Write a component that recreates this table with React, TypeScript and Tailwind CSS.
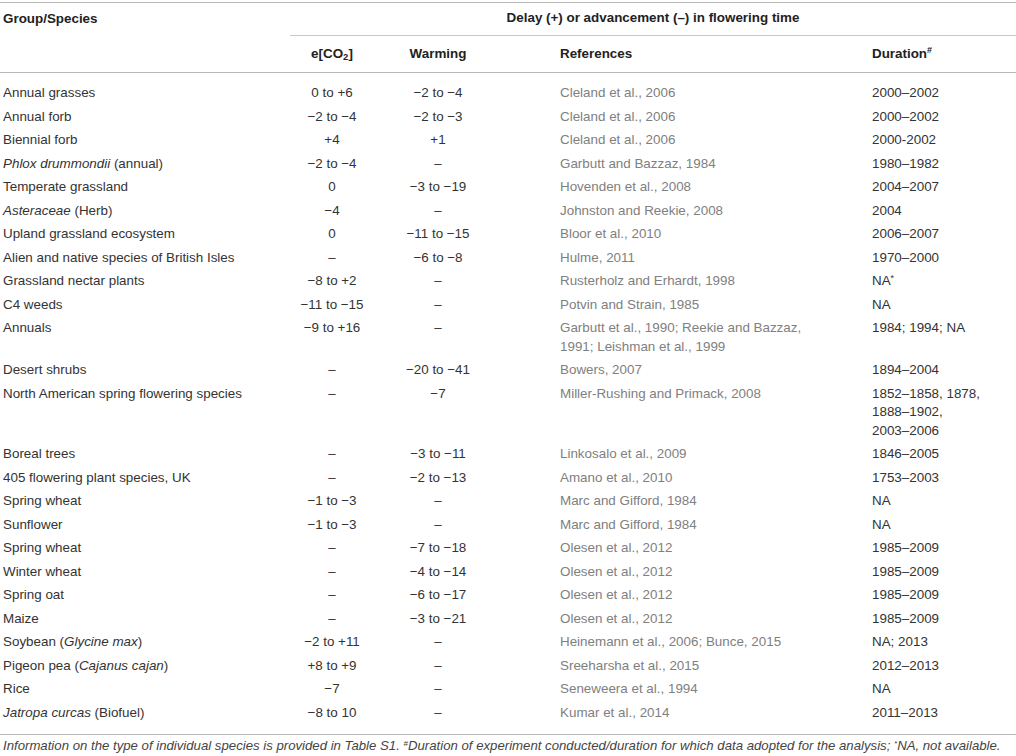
import React from 'react';

// Table: flowering time shifts under e[CO2] and warming

type Row = {
  species: React.ReactNode;
  co2: string;
  warm: string;
  refs: React.ReactNode;
  dur: React.ReactNode;
};

const M = '\u2212';
const D = '\u2013';

const rows: Row[] = [
  { species: 'Annual grasses', co2: `0 to +6`, warm: `${M}2 to ${M}4`, refs: 'Cleland et al., 2006', dur: `2000${D}2002` },
  { species: 'Annual forb', co2: `${M}2 to ${M}4`, warm: `${M}2 to ${M}3`, refs: 'Cleland et al., 2006', dur: `2000${D}2002` },
  { species: 'Biennial forb', co2: '+4', warm: '+1', refs: 'Cleland et al., 2006', dur: '2000-2002' },
  { species: <><i>Phlox drummondii</i> (annual)</>, co2: `${M}2 to ${M}4`, warm: D, refs: 'Garbutt and Bazzaz, 1984', dur: `1980${D}1982` },
  { species: 'Temperate grassland', co2: '0', warm: `${M}3 to ${M}19`, refs: 'Hovenden et al., 2008', dur: `2004${D}2007` },
  { species: <><i>Asteraceae</i> (Herb)</>, co2: `${M}4`, warm: D, refs: 'Johnston and Reekie, 2008', dur: '2004' },
  { species: 'Upland grassland ecosystem', co2: '0', warm: `${M}11 to ${M}15`, refs: 'Bloor et al., 2010', dur: `2006${D}2007` },
  { species: 'Alien and native species of British Isles', co2: D, warm: `${M}6 to ${M}8`, refs: 'Hulme, 2011', dur: `1970${D}2000` },
  { species: 'Grassland nectar plants', co2: `${M}8 to +2`, warm: D, refs: 'Rusterholz and Erhardt, 1998', dur: <>NA<sup className="text-[9px]">*</sup></> },
  { species: 'C4 weeds', co2: `${M}11 to ${M}15`, warm: D, refs: 'Potvin and Strain, 1985', dur: 'NA' },
  {
    species: 'Annuals',
    co2: `${M}9 to +16`,
    warm: D,
    refs: <>Garbutt et al., 1990; Reekie and Bazzaz,<br />1991; Leishman et al., 1999</>,
    dur: '1984; 1994; NA',
  },
  { species: 'Desert shrubs', co2: D, warm: `${M}20 to ${M}41`, refs: 'Bowers, 2007', dur: `1894${D}2004` },
  {
    species: 'North American spring flowering species',
    co2: D,
    warm: `${M}7`,
    refs: 'Miller-Rushing and Primack, 2008',
    dur: <>1852{D}1858, 1878,<br />1888{D}1902,<br />2003{D}2006</>,
  },
  { species: 'Boreal trees', co2: D, warm: `${M}3 to ${M}11`, refs: 'Linkosalo et al., 2009', dur: `1846${D}2005` },
  { species: '405 flowering plant species, UK', co2: D, warm: `${M}2 to ${M}13`, refs: 'Amano et al., 2010', dur: `1753${D}2003` },
  { species: 'Spring wheat', co2: `${M}1 to ${M}3`, warm: D, refs: 'Marc and Gifford, 1984', dur: 'NA' },
  { species: 'Sunflower', co2: `${M}1 to ${M}3`, warm: D, refs: 'Marc and Gifford, 1984', dur: 'NA' },
  { species: 'Spring wheat', co2: D, warm: `${M}7 to ${M}18`, refs: 'Olesen et al., 2012', dur: `1985${D}2009` },
  { species: 'Winter wheat', co2: D, warm: `${M}4 to ${M}14`, refs: 'Olesen et al., 2012', dur: `1985${D}2009` },
  { species: 'Spring oat', co2: D, warm: `${M}6 to ${M}17`, refs: 'Olesen et al., 2012', dur: `1985${D}2009` },
  { species: 'Maize', co2: D, warm: `${M}3 to ${M}21`, refs: 'Olesen et al., 2012', dur: `1985${D}2009` },
  { species: <>Soybean (<i>Glycine max</i>)</>, co2: `${M}2 to +11`, warm: D, refs: 'Heinemann et al., 2006; Bunce, 2015', dur: 'NA; 2013' },
  { species: <>Pigeon pea (<i>Cajanus cajan</i>)</>, co2: '+8 to +9', warm: D, refs: 'Sreeharsha et al., 2015', dur: `2012${D}2013` },
  { species: 'Rice', co2: `${M}7`, warm: D, refs: 'Seneweera et al., 1994', dur: 'NA' },
  { species: <><i>Jatropa curcas</i> (Biofuel)</>, co2: `${M}8 to 10`, warm: D, refs: 'Kumar et al., 2014', dur: `2011${D}2013` },
];

export default function App() {
  return (
    <div className="w-[1016px] h-[756px] bg-white text-[#333] text-[13.4px] leading-[18.5px] [font-family:'Liberation_Sans',Arial,sans-serif] overflow-hidden">
      <table className="w-[1016px] table-fixed border-collapse mt-[2px]">
        <colgroup>
          <col className="w-[290px]" />
          <col className="w-[84px]" />
          <col className="w-[128px]" />
          <col className="w-[370px]" />
          <col className="w-[144px]" />
        </colgroup>
        <thead className="text-[#222]">
          <tr className="border-t border-[#b8b8b8]">
            <th rowSpan={2} className="align-top text-left font-bold pl-[3px] pt-[7px] border-b border-[#b8b8b8]">
              Group/Species
            </th>
            <th colSpan={4} className="font-bold text-center pt-[6px] pb-[7px] border-b border-[#c8c8c8]">
              Delay (+) or advancement ({D}) in flowering time
            </th>
          </tr>
          <tr className="border-b border-[#b8b8b8]">
            <th className="font-bold text-center pt-[9px] pb-[9px]">
              e[CO<sub className="text-[9.5px]">2</sub>]
            </th>
            <th className="font-bold text-center pt-[9px] pb-[9px]">Warming</th>
            <th className="font-bold text-left pl-[58px] pt-[9px] pb-[9px]">References</th>
            <th className="font-bold text-left pt-[9px] pb-[9px]">
              Duration<sup className="text-[9px]">#</sup>
            </th>
          </tr>
        </thead>
        <tbody className="border-b border-[#b8b8b8]">
          {rows.map((r, i) => {
            const first = i === 0;
            const last = i === rows.length - 1;
            const pad = first ? 'pt-[11px] pb-[2.5px]' : last ? 'pt-[2.5px] pb-[12px]' : 'py-[2.5px]';
            return (
              <tr key={i} className="align-top">
                <td className={`pl-[3px] ${pad}`}>{r.species}</td>
                <td className={`text-center ${pad}`}>{r.co2}</td>
                <td className={`text-center ${pad}`}>{r.warm}</td>
                <td className={`pl-[58px] text-[#808080] ${pad}`}>{r.refs}</td>
                <td className={pad}>{r.dur}</td>
              </tr>
            );
          })}
        </tbody>
      </table>
      <p className="pl-[3px] pt-[3px] italic text-[13.2px] leading-[16px] text-[#444] whitespace-nowrap">
        Information on the type of individual species is provided in Table S1. <sup className="text-[8px]">#</sup>Duration of
        experiment conducted/duration for which data adopted for the analysis; <sup className="text-[8px]">*</sup>NA, not available.
      </p>
    </div>
  );
}
